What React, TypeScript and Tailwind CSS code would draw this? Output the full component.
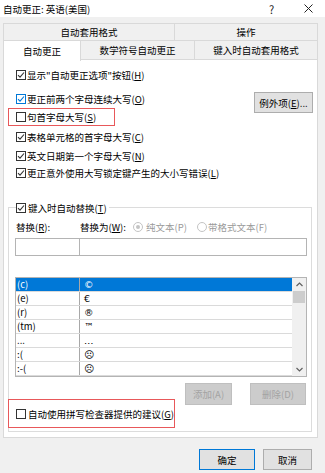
import React from "react";

function Check({ checked, blue }: { checked?: boolean; blue?: boolean }) {
  return (
    <span
      className={`w-[10px] h-[10px] border bg-white shrink-0 flex items-center justify-center ${
        blue ? "border-[#0078d7]" : "border-[#333333]"
      }`}
    >
      {checked && (
        <svg width="8" height="8" viewBox="0 0 8 8">
          <path d="M1 4.2 L3 6.2 L7 1.5" fill="none" stroke={blue ? "#0078d7" : "#333333"} strokeWidth="1.1" />
        </svg>
      )}
    </span>
  );
}

function Acc({ pre, k, post = ")" }: { pre: string; k: string; post?: string }) {
  return (
    <span className="whitespace-nowrap">
      {pre}
      <u>{k}</u>
      {post}
    </span>
  );
}

function CheckRow({ checked, blue, children }: { checked?: boolean; blue?: boolean; children: React.ReactNode }) {
  return (
    <div className="h-[14px] flex items-center gap-[1px] pl-[12px]">
      <Check checked={checked} blue={blue} />
      {children}
    </div>
  );
}

function Radio({ on }: { on?: boolean }) {
  return (
    <span className="w-[10px] h-[10px] rounded-full border border-[#c4c4c4] bg-white flex items-center justify-center shrink-0">
      {on && <span className="w-[4px] h-[4px] rounded-full bg-[#c4c4c4]" />}
    </span>
  );
}

const rows = [
  ["(c)", "©"],
  ["(e)", "€"],
  ["(r)", "®"],
  ["(tm)", "™"],
  ["...", "…"],
  [":(", "☹"],
  [":-(", "☹"],
];

export default function App() {
  return (
    <div className="w-[325px] h-[473px] bg-[#f0f0f0] flex flex-col text-[9.5px] leading-[14px] text-black font-['Noto_Sans_CJK_SC','Noto_Sans',sans-serif] overflow-hidden">
      {/* title bar */}
      <div className="h-[17px] bg-white flex items-center pl-[3px]">
        <span>自动更正: 英语(美国)</span>
        <span className="ml-auto w-[8px] text-[11px] text-[#222]">?</span>
        <svg className="ml-[27px] mr-[12px]" width="9" height="9" viewBox="0 0 9 9">
          <path d="M0.5 0.5 L8.5 8.5 M8.5 0.5 L0.5 8.5" stroke="#222" strokeWidth="1" />
        </svg>
      </div>

      {/* tabs */}
      <div className="mt-[6px] ml-[3px] w-[315px] flex h-[17px]">
        <div className="w-[171px] border-t border-l border-[#d9d9d9] flex items-center justify-center">自动套用格式</div>
        <div className="flex-1 border-t border-l border-r border-[#d9d9d9] flex items-center justify-center">操作</div>
      </div>
      <div className="ml-[3px] w-[315px] flex h-[19px] border-t border-[#d9d9d9]">
        <div className="relative z-10 w-[78px] h-[20px] bg-white border-l border-r border-[#d9d9d9] flex items-center justify-center">
          自动更正
        </div>
        <div className="w-[114px] border-r border-[#d9d9d9] flex items-center justify-center">数学符号自动更正</div>
        <div className="flex-1 border-r border-[#d9d9d9] flex items-center justify-center">键入时自动套用格式</div>
      </div>

      {/* panel */}
      <div className="ml-[3px] w-[315px] h-[379px] bg-white border border-[#d9d9d9] flex flex-col">
        <div className="mt-[8px]">
          <CheckRow checked>
            <Acc pre={'显示"自动更正选项"按钮('} k="H" />
          </CheckRow>
        </div>

        <div className="mt-[10px] flex items-start">
          <div className="flex flex-col">
            <CheckRow checked blue>
              <Acc pre="更正前两个字母连续大写(" k="O" />
            </CheckRow>
            <div className="mt-[2px] ml-[4px] w-[107px] h-[18px] border border-[#e8585a] pl-[7px] flex items-center gap-[1px]">
              <Check />
              <Acc pre="句首字母大写(" k="S" />
            </div>
          </div>
          <div className="ml-auto mr-[4px] w-[59px] h-[21px] bg-[#e1e1e1] border border-[#adadad] flex items-center justify-center">
            <Acc pre="例外项(" k="E" post=")..." />
          </div>
        </div>

        <div className="mt-[4px]">
          <CheckRow checked>
            <Acc pre="表格单元格的首字母大写(" k="C" />
          </CheckRow>
        </div>
        <div className="mt-[5px]">
          <CheckRow checked>
            <Acc pre="英文日期第一个字母大写(" k="N" />
          </CheckRow>
        </div>
        <div className="mt-[3px]">
          <CheckRow checked>
            <Acc pre="更正意外使用大写锁定键产生的大小写错误(" k="L" />
          </CheckRow>
        </div>

        {/* group box */}
        <div className="relative mt-[27px] ml-[4px] w-[304px] h-[225px] border border-[#dcdcdc] flex flex-col">
          <div className="absolute top-[-7px] left-[7px] h-[14px] bg-white pr-[2px] flex items-center gap-[2px]">
            <Check checked />
            <Acc pre="键入时自动替换(" k="T" />
          </div>

          <div className="mt-[12px] h-[14px] pl-[7px] flex items-center">
            <span className="w-[64px]">
              <Acc pre="替换(" k="R" post="):" />
            </span>
            <span className="w-[53px]">
              <Acc pre="替换为(" k="W" post="):" />
            </span>
            <Radio on />
            <span className="ml-[3px] w-[51px] text-[#9a9a9a]">纯文本(P)</span>
            <Radio />
            <span className="ml-[1px] text-[#9a9a9a]">带格式文本(F)</span>
          </div>

          <div className="mt-[4px] ml-[6px] flex h-[18px]">
            <div className="w-[65px] border border-[#b4b4b4]" />
            <div className="w-[227px] border-t border-r border-b border-[#b4b4b4]" />
          </div>

          <div className="mt-[21px] ml-[6px] w-[292px] h-[100px] border border-[#b4b4b4] flex">
            <div className="flex-1 flex flex-col">
              {rows.map(([a, b], i) => (
                <div
                  key={i}
                  className={`h-[14px] flex border-b border-[#dadada] overflow-hidden ${i === 0 ? "bg-[#0078d7] text-white" : ""}`}
                >
                  <div className="w-[64px] pl-[1px] border-r border-[#a8a8a8] leading-[13px]">{a}</div>
                  <div className="pl-[4px] leading-[13px] font-['DejaVu_Sans',sans-serif]">{b}</div>
                </div>
              ))}
            </div>
            <div className="w-[14px] bg-[#f0f0f0] flex flex-col items-center">
              <div className="h-[13px] flex items-center">
                <svg width="7" height="5" viewBox="0 0 7 5">
                  <path d="M0.5 4 L3.5 1 L6.5 4" fill="none" stroke="#606060" strokeWidth="1.2" />
                </svg>
              </div>
              <div className="w-[12px] h-[12px] bg-[#cdcdcd]" />
              <div className="mt-auto h-[13px] flex items-center">
                <svg width="7" height="5" viewBox="0 0 7 5">
                  <path d="M0.5 1 L3.5 4 L6.5 1" fill="none" stroke="#606060" strokeWidth="1.2" />
                </svg>
              </div>
            </div>
          </div>

          <div className="mt-[6px] flex items-start">
            <div className="-ml-[1px] mt-[16px] w-[167px] h-[29px] border border-[#e8585a] pl-[7px] flex items-center gap-[2px]">
              <Check />
              <Acc pre="自动使用拼写检查器提供的建议(" k="G" />
            </div>
            <div className="ml-[10px] w-[47px] h-[22px] bg-[#cccccc] border border-[#bfbfbf] text-[#a3a3a3] flex items-center justify-center">
              添加(A)
            </div>
            <div className="ml-[18px] w-[56px] h-[22px] bg-[#cccccc] border border-[#bfbfbf] text-[#a3a3a3] flex items-center justify-center">
              删除(D)
            </div>
          </div>
        </div>
      </div>

      {/* footer buttons */}
      <div className="mt-[11px] flex justify-end pr-[13px]">
        <div className="w-[56px] h-[21px] bg-[#e1e1e1] border border-[#0078d7] flex items-center justify-center">确定</div>
        <div className="ml-[8px] w-[49px] h-[21px] bg-[#e1e1e1] border border-[#adadad] flex items-center justify-center">取消</div>
      </div>
    </div>
  );
}
